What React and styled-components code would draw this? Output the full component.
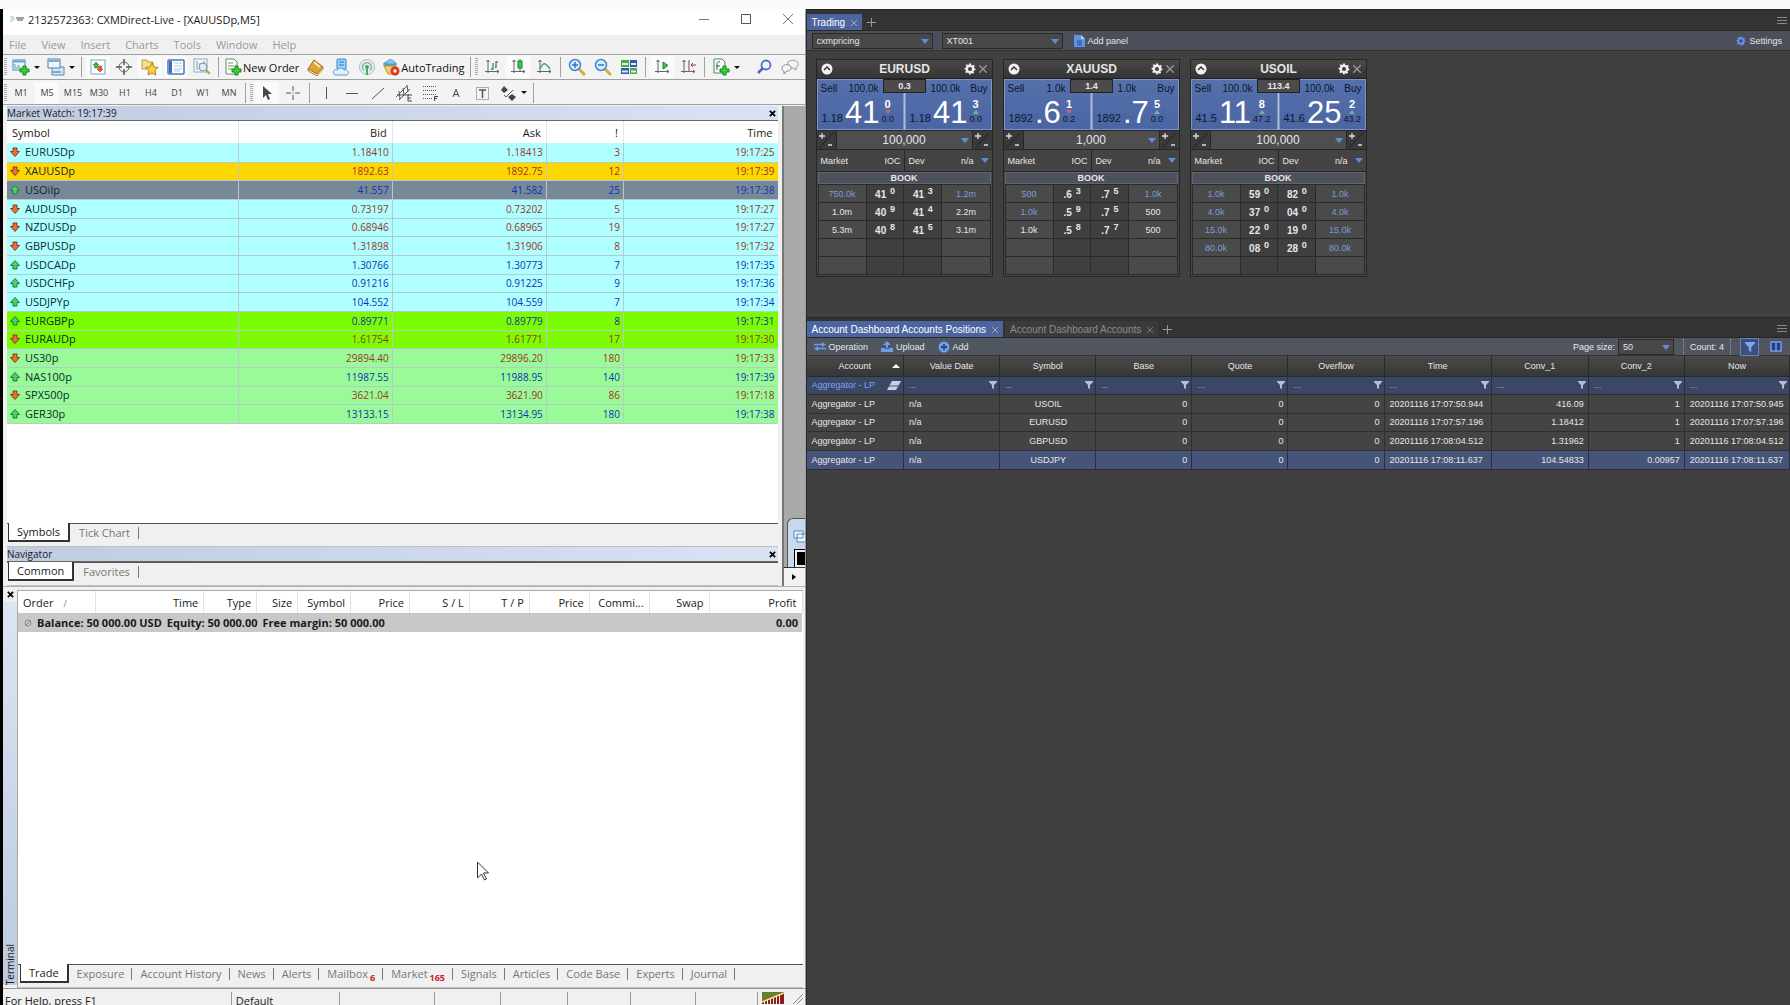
import React from 'react'
import styled, { createGlobalStyle } from 'styled-components'

const ui = '"Open Sans", "Noto Sans", sans-serif'
const arial = '"Liberation Sans", Arial, sans-serif'

const quotes = [
    ['EURUSDp', '1.18410', '1.18413', 3, '19:17:25', 'down', 'aqua'],
    ['XAUUSDp', '1892.63', '1892.75', 12, '19:17:39', 'down', 'gold'],
    ['USOilp', '41.557', '41.582', 25, '19:17:38', 'up', 'slate'],
    ['AUDUSDp', '0.73197', '0.73202', 5, '19:17:27', 'down', 'aqua'],
    ['NZDUSDp', '0.68946', '0.68965', 19, '19:17:27', 'down', 'aqua'],
    ['GBPUSDp', '1.31898', '1.31906', 8, '19:17:32', 'down', 'aqua'],
    ['USDCADp', '1.30766', '1.30773', 7, '19:17:35', 'up', 'aqua'],
    ['USDCHFp', '0.91216', '0.91225', 9, '19:17:36', 'up', 'aqua'],
    ['USDJPYp', '104.552', '104.559', 7, '19:17:34', 'up', 'aqua'],
    ['EURGBPp', '0.89771', '0.89779', 8, '19:17:31', 'up', 'lime'],
    ['EURAUDp', '1.61754', '1.61771', 17, '19:17:30', 'down', 'lime'],
    ['US30p', '29894.40', '29896.20', 180, '19:17:33', 'down', 'mint'],
    ['NAS100p', '11987.55', '11988.95', 140, '19:17:39', 'up', 'mint'],
    ['SPX500p', '3621.04', '3621.90', 86, '19:17:18', 'down', 'mint'],
    ['GER30p', '13133.15', '13134.95', 180, '19:17:38', 'up', 'mint'],
]

const rowColors = {
    aqua: '#aeffff',
    gold: '#ffd700',
    slate: '#778899',
    lime: '#7cfc00',
    mint: '#98fb98',
}

const cards = [
    {
        name: 'EURUSD', spread: '0.3', qty: '100,000',
        sell: { size: '100.0k', pre: '1.18', big: '41', sup: '0', move: '0.0', dir: 'down' },
        buy: { size: '100.0k', pre: '1.18', big: '41', sup: '3', move: '0.0', dir: 'up' },
        book: [
            ['750.0k', '41', '0', '41', '3', '1.2m', true, true],
            ['1.0m', '40', '9', '41', '4', '2.2m'],
            ['5.3m', '40', '8', '41', '5', '3.1m'],
            [], [],
        ],
    },
    {
        name: 'XAUUSD', spread: '1.4', qty: '1,000',
        sell: { size: '1.0k', pre: '1892', big: '.6', sup: '1', move: '0.2', dir: 'down' },
        buy: { size: '1.0k', pre: '1892', big: '.7', sup: '5', move: '0.0', dir: 'up' },
        book: [
            ['500', '.6', '3', '.7', '5', '1.0k', true, true],
            ['1.0k', '.5', '9', '.7', '5', '500', true, false],
            ['1.0k', '.5', '8', '.7', '7', '500'],
            [], [],
        ],
    },
    {
        name: 'USOIL', spread: '113.4', qty: '100,000',
        sell: { size: '100.0k', pre: '41.5', big: '11', sup: '8', move: '47.2', dir: 'up' },
        buy: { size: '100.0k', pre: '41.6', big: '25', sup: '2', move: '43.2', dir: 'up' },
        book: [
            ['1.0k', '59', '0', '82', '0', '1.0k', true, true],
            ['4.0k', '37', '0', '04', '0', '4.0k', true, true],
            ['15.0k', '22', '0', '19', '0', '15.0k', true, true],
            ['80.0k', '08', '0', '28', '0', '80.0k', true, true],
            [],
        ],
    },
]

const positions = [
    ['USOIL', '20201116 17:07:50.944', '416.09', '1', '20201116 17:07:50.945'],
    ['EURUSD', '20201116 17:07:57.196', '1.18412', '1', '20201116 17:07:57.196'],
    ['GBPUSD', '20201116 17:08:04.512', '1.31962', '1', '20201116 17:08:04.512'],
    ['USDJPY', '20201116 17:08:11.637', '104.54833', '0.00957', '20201116 17:08:11.637'],
]

const positionColumns = [
    ['Account', 97], ['Value Date', 96], ['Symbol', 96], ['Base', 96], ['Quote', 96],
    ['Overflow', 96], ['Time', 107], ['Conv_1', 97], ['Conv_2', 96], ['Now', 105],
]

const orderColumns = [
    ['Order', 78], ['Time', 108], ['Type', 53], ['Size', 41], ['Symbol', 53], ['Price', 59],
    ['S / L', 60], ['T / P', 60], ['Price', 60], ['Commi...', 60], ['Swap', 60], ['Profit', 93],
]

const terminalTabs = [
    ['Exposure'], ['Account History'], ['News'], ['Alerts'], ['Mailbox', 6], ['Market', 165],
    ['Signals'], ['Articles'], ['Code Base'], ['Experts'], ['Journal'],
]

const axes = <path d="M5 2v13M2 13.500h14M3.500 4 5 2l1.500 2M14 12l2 1.500-2 1.500" stroke="#666" fill="none" />
const plus = <path d="M11 8h3v3h3v3h-3v3h-3v-3H8v-3h3z" fill="#35d435" stroke="#12851c" />

// 18x18 drawings for the toolbar buttons
const icons = {
    newChart: <><rect x="1" y="2" width="12" height="10" fill="#eaf5fc" stroke="#4d86b8" /><path d="M1 3.500h12" stroke="#6fa3ce" strokeWidth="2" /><path d="M3 6v4h7M5 8h3" stroke="#6a9" fill="none" />{plus}</>,
    profiles: <><path d="M5 9h12v8H5z" fill="#d3e5f5" stroke="#5c84b4" /><path d="M1 1h12v9H1z" fill="#edf6fd" stroke="#4f7db0" /><path d="M2 3h10M5 14h9" stroke="#7da9d6" strokeWidth="2" /></>,
    watch: <><rect x="2" y="2" width="14" height="14" fill="#fff" stroke="#7aa3cc" /><path d="M7 4l3 3H8.500v3h-3V7H4z" fill="#43b04f" stroke="#1b7a26" strokeWidth=".5" /><path d="m11 14 3-3h-1.500V8h-3v3H8z" fill="#e05a32" stroke="#9a3d14" strokeWidth=".5" /></>,
    cross: <><circle cx="9" cy="9" r="5" fill="none" stroke="#666" /><path d="M9 1v6M9 11v6M1 9h6M11 9h6" stroke="#555" strokeWidth="1.500" /></>,
    folder: <><path d="M1 2h5l1 2h5v7H1z" fill="#f7e184" stroke="#b99a3a" /><path d="m11 5 2 4 4 .5-3 3 1 4.500-4-2-4 2 .700-4.500-3-3L9 9z" fill="#ffcf3d" stroke="#b48322" /></>,
    terminal: <><rect x="1" y="2" width="16" height="14" rx="1" fill="#fff" stroke="#4a7ab5" strokeWidth="1.500" /><path d="M2 3h3v12H2z" fill="#3f6fae" /><path d="M7 5h8M7 8h8M7 11h8M7 13h6" stroke="#a9c8e6" /></>,
    tester: <><rect x="1" y="1" width="13" height="13" fill="#f4f8fb" stroke="#8da9c2" /><path d="M4 3v9M7 5v6M11 3v6" stroke="#7d93a8" /><circle cx="10" cy="9" r="4" fill="#dceefa" fillOpacity=".8" stroke="#7792ab" /><path d="m13 12 4 4" stroke="#c39a45" strokeWidth="2" /></>,
    order: <><path d="M2 1h8l3 3v12H2z" fill="#fff" stroke="#6d8a6d" /><path d="M4 5h5M4 8h6M4 11h4" stroke="#5c9c5c" />{plus}</>,
    book: <><path d="M2 11 8 2l9 7-6 7z" fill="#e0a63a" stroke="#94651a" /><path d="m2 11 9 5 6-7v2l-6 7-9-5z" fill="#fae7ac" stroke="#94651a" strokeWidth=".7" /><path d="m8 4 6 5" stroke="#ffe9a5" strokeWidth="2" /></>,
    server: <><rect x="5" y="1" width="9" height="10" rx="1" fill="#9fd2fb" stroke="#2d83cf" /><path d="M7 4h5M7 7h5" stroke="#2879c4" /><path d="M2 16c-2-3 1-5 3-4 2-3 6-2 7 0 4-1 6 3 3 5H3z" fill="#e3f0fb" stroke="#5e9fd8" /></>,
    signal: <><circle cx="9" cy="9" r="7.500" fill="#e4eef0" stroke="#a9bfc6" /><path d="M6 12.500a4.500 4.500 0 1 1 6 0" fill="none" stroke="#7fa6b4" strokeWidth="1.300" /><circle cx="9" cy="9" r="2" fill="#3ea554" /><path d="M9 9v8" stroke="#45ad60" strokeWidth="2" /></>,
    auto: <><ellipse cx="8" cy="6" rx="7" ry="3" fill="#54a7d8" /><path d="M4 6c0-6 9-6 9 0z" fill="#7dc5ec" stroke="#3985b5" strokeWidth=".5" /><path d="M2 8h12l-2 8H6z" fill="#f2ce66" stroke="#bb8f2c" /><circle cx="13" cy="13" r="4.500" fill="#dc3820" /><rect x="11.500" y="11.500" width="3" height="3" fill="#fff" /></>,
    bars: <>{axes}<path d="M8 11h2V5m0 0v6M13 10V4h2M12 9h1" stroke="#3d8b4d" fill="none" strokeWidth="1.300" /></>,
    candle: <>{axes}<path d="M11 1v12" stroke="#1d8031" /><rect x="9" y="3" width="4" height="7" fill="#36c94a" stroke="#1d8031" /></>,
    line: <>{axes}<path d="M5 11c3-7 5-7 10 0" stroke="#4c9f5b" fill="none" strokeWidth="1.300" /></>,
    zoomIn: <><path d="m11 11 6 6" stroke="#d8ac3f" strokeWidth="3" /><circle cx="7" cy="7" r="5.500" fill="#d4ecff" stroke="#3d88cf" strokeWidth="1.500" /><path d="M4 7h6M7 4v6" stroke="#3575bf" strokeWidth="1.500" /></>,
    zoomOut: <><path d="m11 11 6 6" stroke="#d8ac3f" strokeWidth="3" /><circle cx="7" cy="7" r="5.500" fill="#d4ecff" stroke="#3d88cf" strokeWidth="1.500" /><path d="M4 7h6" stroke="#3575bf" strokeWidth="1.500" /></>,
    tiles: <><path d="M1 2h8v7H1zM10 10h7v6h-7z" fill="#4ea843" /><path d="M10 2h7v7h-7zM1 10h8v6H1z" fill="#2c5da8" /><path d="M2 6h6M11 6h5M2 13.500h6M11 13.500h5" stroke="#dcecf8" strokeWidth="2" /></>,
    scroll: <>{axes}<path d="m10 4 5 3.500-5 3.500z" fill="#46c257" stroke="#1b8532" /></>,
    shift: <>{axes}<path d="M10 2v11M17 7h-5M14 5l-2 2 2 2" stroke="#7a4a3c" fill="none" /></>,
    indicator: <><path d="M2 1h8l3 3v11H2z" fill="#f8fff8" stroke="#4c8a4c" /><path d="M8 4c-3-1-3 1-3 3v5M4 8h4" fill="none" stroke="#456" />{plus}</>,
    search: <><circle cx="11" cy="7" r="4.500" fill="#edf3ff" stroke="#5670c4" strokeWidth="1.800" /><path d="m8 10-5 5" stroke="#4c66bd" strokeWidth="2.500" /></>,
    chat: <><path d="M7 4c3-3 10-2 10 2 0 2-1 3-2 3v3l-3-2c-4 0-6-3-5-6z" fill="#f5f5f5" stroke="#999" /><path d="M1 10c0-3 4-4 7-3 4 2 2 6-2 6l-3 3v-3c-1 0-2-1-2-3z" fill="#f5f5f5" stroke="#888" /></>,
    cursor: <path d="M5 2v12l3-3 2 5 2-1-2-5h4z" fill="#4a4a4a" />,
    thinCross: <path d="M9 2v5M9 11v5M2 9h5M11 9h5M8.500 9h1" stroke="#555" />,
    vline: <path d="M9.500 3v12" stroke="#555" />,
    hline: <path d="M3 9.500h12" stroke="#555" />,
    trend: <path d="M3 15 15 4" stroke="#555" />,
    channel: <><path d="M1 13 12 2M4 16 15 5M4 7l1 8M8 4l1 7M12 1l1 7M2 11h12" stroke="#555" fill="none" /><path d="M17 11h-4v6h4M13 14h3" stroke="#444" fill="none" /></>,
    fib: <><path d="M2 2.500h13M2 6.500h13M2 10.500h13M2 14.500h9" stroke="#555" strokeDasharray="1 1" /><path d="M17 12.500h-3.500V17M13 14.500h3" stroke="#444" fill="none" /></>,
    textBox: <><rect x="3.500" y="3.500" width="12" height="12" fill="none" stroke="#666" strokeDasharray="1 1" /><path d="M6 6h7M9.500 6v8" stroke="#555" strokeWidth="1.500" /></>,
    shapes: <><path d="m5 2 4 4-4 3-3-3zM13 10l4 3-4 4-4-4z" fill="#444" /><path d="m5 11 2 2 7-7" stroke="#555" fill="none" /></>,
}

const Icon = ({ name, size = 18 }) => (
    <svg width={size} height={size} viewBox="0 0 18 18" aria-hidden="true">{icons[name]}</svg>
)

const Caret = ({ color = '#111' }) => (
    <svg width="6" height="3" viewBox="0 0 6 3" aria-hidden="true"><path d="M0 0h6L3 3z" fill={color} /></svg>
)

const BlueCaret = () => (
    <svg width="8" height="5" viewBox="0 0 8 5" aria-hidden="true"><path d="M0 0h8L4 5z" fill="#5f8be0" /></svg>
)

const Cross = ({ size = 8, color = '#aaa', weight = 1 }) => (
    <svg width={size} height={size} viewBox="0 0 8 8" aria-hidden="true">
        <path d="m1 1 6 6M7 1 1 7" stroke={color} strokeWidth={weight} />
    </svg>
)

const Gear = ({ size = 12, color = '#eee' }) => (
    <svg width={size} height={size} viewBox="0 0 24 24" aria-hidden="true">
        <path fillRule="evenodd" fill={color} d="M10 1h4l.7 3.200 2 .9L19.500 3.300l2 2.500-1.300 3 .6 1.700L23 12v2l-3 1-1 2 1.300 2.700-2.600 2-2.700-1.400-1.700.6L13.500 23h-3.200l-.9-3-2-.9-2.900 1.600-2-2.700L4 15.300l-.6-1.800L1 12v-2l3-1 .8-2-1.500-2.600 2.300-2L8.300 4l1.200-.5zM12 8a4 4 0 1 0 0 8 4 4 0 0 0 0-8z" />
    </svg>
)

const Funnel = ({ size = 8, color = '#b4bfd6' }) => (
    <svg width={size} height={size} viewBox="0 0 8 8" aria-hidden="true"><path d="M0 0h8v1L5 4v4L3 7V4L0 1z" fill={color} /></svg>
)

const Arrow = ({ dir }) => (
    <svg width="10" height="10" viewBox="0 0 10 10" aria-hidden="true">
        {dir === 'up'
            ? <path d="m5 .500 4.500 5H7V9H3V5.500H.500z" fill="#4fd06a" stroke="#1d7a3c" />
            : <path d="m5 9.500 4.500-5H7V1H3v3.500H.500z" fill="#e5713a" stroke="#8a3a18" />}
    </svg>
)

const Burger = () => (
    <svg width="10" height="8" viewBox="0 0 10 8" aria-hidden="true"><path d="M0 1.500h10M0 4.500h10M0 7.500h10" stroke="#888" /></svg>
)

const Tool = ({ name, label, drop, active, children }) => (
    <ToolButton type="button" aria-label={label} $active={active} $drop={drop} $wide={!!children}>
        <Icon name={name} />
        {children}
        {drop && <Caret />}
    </ToolButton>
)

const PriceSide = ({ label, side, buy }) => (
    <PriceButton type="button">
        <PriceTop $buy={buy}>
            <span>{label}</span>
            <span>{side.size}</span>
        </PriceTop>
        <PriceLine>
            <Small>{side.pre}</Small>
            <Big>{side.big}</Big>
            <Pips>
                <b>{side.sup}</b>
                <svg width="6" height="4" viewBox="0 0 6 4" aria-hidden="true">
                    {side.dir === 'up' ? <path d="m3 0 3 4H0z" fill="#6fb8a0" /> : <path d="M0 0h6L3 4z" fill="#d0607c" />}
                </svg>
                <span>{side.move}</span>
            </Pips>
        </PriceLine>
    </PriceButton>
)

const StepButton = ({ name }) => (
    <Step type="button" aria-label={name}>
        <svg width="17" height="18" viewBox="0 0 17 18" aria-hidden="true">
            <path d="M2 17 16 2" stroke="#222" />
            <path d="M2 5h6M5 2v6M11 14h4" stroke="#ddd" strokeWidth="1.300" />
        </svg>
    </Step>
)

const PriceCard = ({ card }) => (
    <Card>
        <CardHead>
            <IconButton type="button" aria-label="Collapse">
                <svg width="12" height="12" viewBox="0 0 12 12"><circle cx="6" cy="6" r="5.500" fill="#f2f2f2" /><path d="m3 7 3-3 3 3" fill="none" stroke="#333" strokeWidth="1.500" /></svg>
            </IconButton>
            <CardName>{card.name}</CardName>
            <IconButton type="button" aria-label="Card settings"><Gear /></IconButton>
            <IconButton type="button" aria-label="Close card"><Cross size={10} color="#999" /></IconButton>
        </CardHead>
        <Prices>
            <PriceSide label="Sell" side={card.sell} />
            <PriceSide label="Buy" side={card.buy} buy />
            <Spread>{card.spread}</Spread>
        </Prices>
        <QtyRow>
            <StepButton name="Sell size" />
            <Qty type="button"><span>{card.qty}</span><BlueCaret /></Qty>
            <StepButton name="Buy size" />
        </QtyRow>
        <Terms>
            <Term><span>Market</span><span>IOC</span></Term>
            <Term><span>Dev</span><TermValue>n/a <BlueCaret /></TermValue></Term>
        </Terms>
        <Book>
            <caption>BOOK</caption>
            <tbody>
                {card.book.map((r, i) => (
                    <tr key={i}>
                        <SizeCell $blue={r[6]}>{r[0]}</SizeCell>
                        <LevelCell>{r[1]} <sup>{r[2]}</sup></LevelCell>
                        <LevelCell>{r[3]} <sup>{r[4]}</sup></LevelCell>
                        <SizeCell $blue={r[7]}>{r[5]}</SizeCell>
                    </tr>
                ))}
            </tbody>
        </Book>
    </Card>
)

const MetaTrader = () => (
    <Window>
        <TitleBar>
            <svg width="14" height="8" viewBox="0 0 14 8" aria-hidden="true"><path d="M0 2h4M1 4h4M0 6h3" stroke="#8fd08f" /><path d="M6 3h8M7 5h6" stroke="#444" /></svg>
            <TitleText>2132572363: CXMDirect-Live - [XAUUSDp,M5]</TitleText>
            <WinButton type="button" aria-label="Minimize"><svg width="10" height="10" viewBox="0 0 10 10"><path d="M0 5.500h10" stroke="#777" /></svg></WinButton>
            <WinButton type="button" aria-label="Maximize"><svg width="10" height="10" viewBox="0 0 10 10"><path d="M.5.500h9v9h-9z" fill="none" stroke="#555" /></svg></WinButton>
            <WinButton type="button" aria-label="Close"><svg width="10" height="10" viewBox="0 0 10 10"><path d="m0 0 10 10M10 0 0 10" stroke="#777" /></svg></WinButton>
        </TitleBar>
        <Menu>
            {['File', 'View', 'Insert', 'Charts', 'Tools', 'Window', 'Help'].map(m => (
                <MenuItem type="button" key={m}>{m}</MenuItem>
            ))}
        </Menu>
        <ToolBar>
            <Grip />
            <Tool name="newChart" label="New chart" drop />
            <Tool name="profiles" label="Profiles" drop />
            <Divider />
            <Tool name="watch" label="Market Watch" active />
            <Tool name="cross" label="Data window" />
            <Tool name="folder" label="Navigator" active />
            <Tool name="terminal" label="Terminal" active />
            <Tool name="tester" label="Strategy tester" />
            <Divider />
            <Tool name="order">New Order</Tool>
            <Tool name="book" label="MetaEditor" />
            <Tool name="server" label="Hosting" />
            <Tool name="signal" label="Signals" />
            <Tool name="auto">AutoTrading</Tool>
            <Divider />
            <Grip />
            <Tool name="bars" label="Bar chart" />
            <Tool name="candle" label="Candlesticks" active />
            <Tool name="line" label="Line chart" />
            <Divider />
            <Tool name="zoomIn" label="Zoom in" />
            <Tool name="zoomOut" label="Zoom out" />
            <Tool name="tiles" label="Tile windows" />
            <Divider />
            <Tool name="scroll" label="Auto scroll" active />
            <Tool name="shift" label="Chart shift" />
            <Divider />
            <Tool name="indicator" label="Indicators" drop />
            <Spacer />
            <Tool name="search" label="Search" />
            <Tool name="chat" label="Chat" />
        </ToolBar>
        <ToolBar>
            <Grip />
            {['M1', 'M5', 'M15', 'M30', 'H1', 'H4', 'D1', 'W1', 'MN'].map(p => (
                <ToolButton type="button" key={p} $active={p === 'M5'} $period>{p}</ToolButton>
            ))}
            <Divider />
            <Grip />
            <Tool name="cursor" label="Cursor" active />
            <Tool name="thinCross" label="Crosshair" />
            <Divider />
            <Tool name="vline" label="Vertical line" />
            <Tool name="hline" label="Horizontal line" />
            <Tool name="trend" label="Trendline" />
            <Tool name="channel" label="Channel" />
            <Tool name="fib" label="Fibonacci" />
            <ToolButton type="button" $letter>A</ToolButton>
            <Tool name="textBox" label="Text label" />
            <Tool name="shapes" label="Arrows" drop />
            <Divider />
        </ToolBar>
        <Workspace>
            <Docks>
                <PanelTitle>
                    <span>Market Watch: 19:17:39</span>
                    <CloseButton type="button" aria-label="Close Market Watch"><Cross color="#000" weight={2} size={7} /></CloseButton>
                </PanelTitle>
                <Watch>
                    <WatchTable>
                        <colgroup>
                            <col style={{ width: '30%' }} /><col style={{ width: '20%' }} /><col style={{ width: '20%' }} />
                            <col style={{ width: '10%' }} /><col style={{ width: '20%' }} />
                        </colgroup>
                        <thead>
                            <tr><th>Symbol</th><th>Bid</th><th>Ask</th><th>!</th><th>Time</th></tr>
                        </thead>
                        <tbody>
                            {quotes.map(([symbol, bid, ask, spread, time, dir, tone]) => (
                                <QuoteRow key={symbol} $tone={tone} $dir={dir}>
                                    <td><Quote><Arrow dir={dir} />{symbol}</Quote></td>
                                    <td>{bid}</td>
                                    <td>{ask}</td>
                                    <td>{spread}</td>
                                    <td>{time}</td>
                                </QuoteRow>
                            ))}
                        </tbody>
                    </WatchTable>
                </Watch>
                <Tabs>
                    <Tab type="button" $active>Symbols</Tab>
                    <Tab type="button">Tick Chart</Tab>
                </Tabs>
                <PanelTitle>
                    <span>Navigator</span>
                    <CloseButton type="button" aria-label="Close Navigator"><Cross color="#000" weight={2} size={7} /></CloseButton>
                </PanelTitle>
                <Tabs>
                    <Tab type="button" $active>Common</Tab>
                    <Tab type="button">Favorites</Tab>
                </Tabs>
            </Docks>
            <ChartArea>
                <MiniWindow>
                    <svg width="12" height="14" viewBox="0 0 12 14" aria-hidden="true"><path d="M1 1h9v7H1zM4 4h9v8H4z" fill="#eef7ff" stroke="#4b8fc4" /></svg>
                    <MiniChart />
                </MiniWindow>
                <ScrollEnd>
                    <svg width="5" height="6" viewBox="0 0 5 6" aria-hidden="true"><path d="M0 0v6l4-3z" /></svg>
                </ScrollEnd>
            </ChartArea>
        </Workspace>
        <Terminal>
            <TerminalSide>
                <CloseButton type="button" aria-label="Close Terminal"><Cross color="#000" weight={2} size={7} /></CloseButton>
                <SideLabel>Terminal</SideLabel>
            </TerminalSide>
            <TerminalMain>
                <OrdersPane>
                    <Orders>
                        <colgroup>{orderColumns.map(([, w], i) => <col key={i} style={{ width: `${w / 7.85}%` }} />)}</colgroup>
                        <thead>
                            <tr>
                                {orderColumns.map(([name], i) => (
                                    <th key={i}>{name}{i === 0 && <SortMark>/</SortMark>}</th>
                                ))}
                            </tr>
                        </thead>
                        <tbody>
                            <tr>
                                <td colSpan="11">
                                    <Balance>
                                        <svg width="8" height="8" viewBox="0 0 8 8" aria-hidden="true"><circle cx="4" cy="4" r="3" fill="none" stroke="#888" /><path d="m2 6 4-4" stroke="#888" /></svg>
                                        <span>Balance: 50 000.00 USD</span>
                                        <span>Equity: 50 000.00</span>
                                        <span>Free margin: 50 000.00</span>
                                    </Balance>
                                </td>
                                <td>0.00</td>
                            </tr>
                        </tbody>
                    </Orders>
                </OrdersPane>
                <Tabs $last>
                    <Tab type="button" $active>Trade</Tab>
                    {terminalTabs.map(([name, count]) => (
                        <Tab type="button" key={name} $tight>{name}{count && <Count>{count}</Count>}</Tab>
                    ))}
                </Tabs>
            </TerminalMain>
        </Terminal>
        <StatusBar>
            <StatusCell>For Help, press F1</StatusCell>
            <StatusCell>Default</StatusCell>
            <StatusCell />
            <StatusCell />
            <StatusCell />
            <StatusCell />
            <StatusCell />
            <StatusCell />
            <StatusCell>
                <svg width="22" height="12" viewBox="0 0 22 12" aria-hidden="true">
                    <path d="M1 0v12M4 0v12M7 0v12M10 0v12M13 0v12M16 0v12M19 0v12M21 0v12" stroke="#8a1f14" strokeWidth="2" />
                    <path d="M0 0h22v1L0 10z" fill="#6b7d2c" />
                    <path d="M0 10 22 1" stroke="#f2e8a0" strokeWidth="1.500" />
                </svg>
                <svg width="10" height="12" viewBox="0 0 10 12" aria-hidden="true"><path d="m0 12 10-10M4 12l6-6" stroke="#888" /></svg>
            </StatusCell>
        </StatusBar>
    </Window>
)

const Trader = () => (
    <Platform>
        <TabStrip>
            <DarkTab type="button" $active>Trading <Cross /></DarkTab>
            <PlusButton type="button" aria-label="Add tab">
                <svg width="9" height="9" viewBox="0 0 9 9"><path d="M0 4.500h9M4.500 0v9" stroke="#999" /></svg>
            </PlusButton>
            <Spacer />
            <IconButton type="button" aria-label="Trading menu"><Burger /></IconButton>
        </TabStrip>
        <Bar>
            <SelectBox $width={121}>
                <select aria-label="Pricing"><option>cxmpricing</option></select>
                <BlueCaret />
            </SelectBox>
            <SelectBox $width={121}>
                <select aria-label="Account"><option>XT001</option></select>
                <BlueCaret />
            </SelectBox>
            <BarButton type="button">
                <svg width="11" height="12" viewBox="0 0 11 12" aria-hidden="true"><path d="M0 0h7l4 4v8H0z" fill="#5f93ea" /><path d="M7 0v4h4" fill="#b9d1f8" /><path d="M3 6h5M3 8h5M3 10h5" stroke="#2c4f91" /></svg>
                Add panel
            </BarButton>
            <Spacer />
            <BarButton type="button"><Gear size={10} color="#5f93ea" />Settings</BarButton>
        </Bar>
        <Cards>
            {cards.map(card => <PriceCard card={card} key={card.name} />)}
        </Cards>
        <TabStrip $second>
            <DarkTab type="button" $active>Account Dashboard Accounts Positions <Cross /></DarkTab>
            <DarkTab type="button">Account Dashboard Accounts <Cross color="#777" /></DarkTab>
            <PlusButton type="button" aria-label="Add dashboard">
                <svg width="9" height="9" viewBox="0 0 9 9"><path d="M0 4.500h9M4.500 0v9" stroke="#999" /></svg>
            </PlusButton>
            <Spacer />
            <IconButton type="button" aria-label="Dashboard menu"><Burger /></IconButton>
        </TabStrip>
        <Bar $slim>
            <BarButton type="button">
                <svg width="12" height="9" viewBox="0 0 12 9" aria-hidden="true"><path d="M0 2.500h9M3 6.500h9" stroke="#6d9cf0" strokeWidth="1.500" /><path d="m8 0 4 2.500L8 5zM4 4 0 6.500 4 9z" fill="#6d9cf0" /></svg>
                Operation
            </BarButton>
            <BarButton type="button">
                <svg width="12" height="11" viewBox="0 0 12 11" aria-hidden="true"><path d="m6 0 4 4H7v3H5V4H2zM0 7h4v1h4V7h4v4H0z" fill="#6d9cf0" /></svg>
                Upload
            </BarButton>
            <BarButton type="button">
                <svg width="12" height="12" viewBox="0 0 12 12" aria-hidden="true"><circle cx="6" cy="6" r="5.500" fill="#6d9cf0" /><path d="M3 6h6M6 3v6" stroke="#34466b" strokeWidth="1.800" /></svg>
                Add
            </BarButton>
            <Spacer />
            <label htmlFor="page-size">Page size:</label>
            <SelectBox $width={56} $tight>
                <select id="page-size"><option>50</option></select>
                <BlueCaret />
            </SelectBox>
            <CountLabel>Count: 4</CountLabel>
            <FilterToggle type="button" aria-label="Filter"><Funnel size={10} color="#7aa7f5" /></FilterToggle>
            <BarButton type="button" aria-label="Columns">
                <svg width="12" height="11" viewBox="0 0 12 11" aria-hidden="true"><path d="M1 1h10v9H1zM6 1v9" fill="#27406f" stroke="#6d9cf0" strokeWidth="1.500" /></svg>
            </BarButton>
        </Bar>
        <Positions>
            <colgroup>{positionColumns.map(([name, w]) => <col key={name} style={{ width: `${w / 9.82}%` }} />)}</colgroup>
            <thead>
                <tr>
                    {positionColumns.map(([name], i) => (
                        <th key={name}>
                            <HeadCell $sorted={i === 0}>
                                <span>{name}</span>
                                {i === 0 && <svg width="8" height="4" viewBox="0 0 8 4" aria-hidden="true"><path d="m4 0 4 4H0z" fill="#fff" /></svg>}
                            </HeadCell>
                        </th>
                    ))}
                </tr>
                <FilterRow>
                    {positionColumns.map(([name], i) => (
                        <td key={name}>
                            <FilterCell>
                                <input type="text" aria-label={`Filter ${name}`} placeholder="..." defaultValue={i === 0 ? 'Aggregator - LP' : ''} />
                                {i === 0
                                    ? <svg width="14" height="9" viewBox="0 0 14 9" aria-hidden="true"><path d="M5 0h9L9 9H0z" fill="#c7cfe0" /><path d="M2 5h9" stroke="#4b5878" /></svg>
                                    : <Funnel />}
                            </FilterCell>
                        </td>
                    ))}
                </FilterRow>
            </thead>
            <tbody>
                {positions.map(([symbol, time, conv1, conv2, now], i) => (
                    <PositionRow key={symbol} $selected={i === 3}>
                        <td>Aggregator - LP</td>
                        <td>n/a</td>
                        <CenterCell>{symbol}</CenterCell>
                        <NumberCell>0</NumberCell>
                        <NumberCell>0</NumberCell>
                        <NumberCell>0</NumberCell>
                        <td>{time}</td>
                        <NumberCell>{conv1}</NumberCell>
                        <NumberCell>{conv2}</NumberCell>
                        <td>{now}</td>
                    </PositionRow>
                ))}
            </tbody>
        </Positions>
    </Platform>
)

const App = () => (
    <>
        <GlobalStyle />
        <Screen>
            <MetaTrader />
            <Trader />
            <Pointer width="12" height="20" viewBox="0 0 12 20" aria-hidden="true">
                <path d="M.5 1v16l4-4 3 6 2-1-3-6h5z" fill="#fff" stroke="#333" />
            </Pointer>
        </Screen>
    </>
)

const GlobalStyle = createGlobalStyle`
    * {
        box-sizing: border-box;
    }
    body {
        margin: 0;
        background: #f9f9f9;
    }
    button, input, select {
        font: inherit;
        color: inherit;
        margin: 0;
        padding: 0;
        border: none;
        background: none;
    }
    svg {
        display: block;
        flex: none;
    }
    table {
        border-collapse: collapse;
        border-spacing: 0;
        table-layout: fixed;
        width: 100%;
    }
    th, td {
        padding: 0;
        font-weight: normal;
    }
`;

const Screen = styled.main`
    position: relative;
    display: grid;
    grid-template-columns: 45fr 55fr;
    height: 100vh;
    padding-top: 9px;
    overflow: hidden;
`;

const Pointer = styled.svg`
    position: absolute;
    left: 477px;
    top: 861px;
`;

const Spacer = styled.div`
    flex: 1;
`;

/* left window */

const Window = styled.section`
    display: flex;
    flex-direction: column;
    min-width: 0;
    min-height: 0;
    border-left: 3px solid #000;
    border-right: 1px solid #9a9a9a;
    background: #f0f0f0;
    color: #1a1a1a;
    font-family: ${ui};
    font-size: 11px;
`;

const TitleBar = styled.header`
    display: flex;
    align-items: center;
    height: 26px;
    padding: 0 12px 6px 7px;
    background: #fff;
`;

const TitleText = styled.h1`
    flex: 1;
    margin: 0 0 0 4px;
    font-size: 11px;
    font-weight: normal;
`;

const WinButton = styled.button`
    margin-left: 32px;
`;

const Menu = styled.nav`
    display: flex;
    gap: 15px;
    height: 20px;
    padding: 0 6px;
    border-bottom: 1px solid #a0a0a0;
`;

const MenuItem = styled.button`
    color: #999;
`;

const ToolBar = styled.div`
    display: flex;
    align-items: center;
    height: 25px;
    padding-right: 2px;
    border-bottom: 1px solid #a0a0a0;
    background: #f3f3f3;
    & + & {
        padding-top: 1px;
    }
`;

const ToolButton = styled.button`
    display: flex;
    align-items: center;
    justify-content: ${p => (p.$wide ? 'flex-start' : 'center')};
    gap: ${p => (p.$wide ? '1px' : '4px')};
    flex: none;
    width: ${p => (p.$wide ? 'auto' : p.$drop ? '33px' : '24px')};
    height: 22px;
    margin: 0 1px;
    white-space: nowrap;
    padding-right: ${p => (p.$wide ? '1px' : '0')};
    border: 1px solid ${p => (p.$active ? '#a0a0a0 #fff #fff #a0a0a0' : 'transparent')};
    background: ${p => (p.$active ? '#fafafa' : 'none')};
    color: ${p => (p.$period || p.$letter ? '#444' : '#111')};
    font-size: ${p => (p.$period ? '9px' : '11px')};
`;

const Divider = styled.div`
    flex: none;
    width: 1px;
    height: 20px;
    margin: 0 3px;
    background: #a0a0a0;
`;

const Grip = styled.div`
    flex: none;
    width: 3px;
    height: 18px;
    margin: 0 1px;
    background: repeating-linear-gradient(#aaa 0 1px, #f3f3f3 1px 2px);
`;

const Workspace = styled.div`
    display: flex;
    padding-top: 1px;
    border-bottom: 1px solid #b0b0b0;
`;

const Docks = styled.div`
    flex: 1;
    min-width: 0;
    padding: 0 4px;
`;

const PanelTitle = styled.div`
    display: flex;
    align-items: center;
    justify-content: space-between;
    height: 15px;
    padding-right: 1px;
    border-bottom: 1px solid #666;
    background: linear-gradient(90deg, #bfcbe0, #d8e4f4);
    font-size: 10px;
`;

const CloseButton = styled.button`
    display: flex;
    flex: none;
    padding: 1px;
`;

const Watch = styled.div`
    min-height: 402px;
    background: #fff;
`;

const WatchTable = styled.table`
    th {
        height: 22px;
        padding: 0 5px;
        border-right: 1px solid #e5e5e5;
        text-align: right;
        &:first-child {
            text-align: left;
        }
        &:last-child {
            border-right: none;
        }
    }
`;

const QuoteRow = styled.tr`
    background: ${p => rowColors[p.$tone]};
    color: ${p => (p.$dir === 'up' ? '#1430b4' : '#a03228')};
    td {
        height: 19px;
        padding: 0 3px;
        border-right: 1px solid #b9c9c9;
        border-bottom: 1px solid #b9c9c9;
        text-align: right;
        font-size: 10px;
        line-height: 14px;
    }
    td:first-child {
        color: #0c2a30;
        font-size: 11px;
    }
    td:last-child {
        border-right: none;
    }
    &:nth-child(3n + 2) td {
        height: 18px;
    }
`;

const Quote = styled.div`
    display: flex;
    align-items: center;
    gap: 5px;
`;

const Tabs = styled.div`
    display: flex;
    align-items: flex-start;
    height: 24px;
    padding-left: ${p => (p.$last ? '2px' : '1px')};
    border-top: 1px solid #555;
    border-bottom: 1px solid #c0c0c0;
`;

const Tab = styled.button`
    position: relative;
    flex: none;
    height: 18px;
    padding: 0 ${p => (p.$tight ? '8px' : '9px')};
    line-height: 16px;
    color: ${p => (p.$active ? '#1a1a1a' : '#777')};
    ${p => p.$active && `
        margin-top: -1px;
        height: 19px;
        padding: 0 8px;
        background: #fff;
        border: solid #333;
        border-width: 0 2px 2px 1px;
    `}
    &:not(:first-child)::after {
        content: '';
        position: absolute;
        right: 0;
        top: 3px;
        width: 1px;
        height: 12px;
        background: #777;
    }
`;

const Count = styled.sub`
    margin-left: 2px;
    color: #c22;
    font-size: 9px;
    font-weight: bold;
    line-height: 9px;
`;

const ChartArea = styled.div`
    display: flex;
    flex-direction: column;
    width: 23px;
    border-left: 2px solid #777;
    background: #a9a9a9;
`;

const MiniWindow = styled.div`
    display: flex;
    flex-direction: column;
    align-items: flex-end;
    gap: 6px;
    margin-top: auto;
    margin-left: 3px;
    padding-top: 11px;
    border: solid #555;
    border-width: 1px 0 0 1px;
    border-radius: 6px 0 0 0;
    background: #c9d9ec;
    overflow: hidden;
`;

const MiniChart = styled.div`
    width: 10px;
    height: 17px;
    border: 2px solid #eee;
    border-right: none;
    outline: 1px solid #000;
    background: #000;
`;

const ScrollEnd = styled.div`
    display: flex;
    align-items: center;
    justify-content: center;
    height: 19px;
    border-top: 1px solid #333;
    background: #f3f3f3;
`;

const Terminal = styled.div`
    display: flex;
    flex: 1;
    min-height: 0;
    padding: 3px 2px 0 0;
`;

const TerminalSide = styled.div`
    display: flex;
    flex-direction: column;
    align-items: center;
    justify-content: space-between;
    width: 14px;
    margin-bottom: 3px;
    background: linear-gradient(#f0f0f0 12px, #dbe5f3 12px, #bccadf);
`;

const SideLabel = styled.span`
    writing-mode: vertical-rl;
    transform: rotate(180deg);
    font-size: 10px;
    line-height: 13px;
`;

const TerminalMain = styled.div`
    display: flex;
    flex-direction: column;
    flex: 1;
    min-width: 0;
    border-left: 1px solid #aaa;
`;

const OrdersPane = styled.div`
    flex: 1;
    border-top: 1px solid #aaa;
    background: #fff;
`;

const Orders = styled.table`
    th {
        height: 22px;
        padding: 0 5px;
        border-right: 1px solid #e2e2e2;
        text-align: right;
        white-space: nowrap;
    }
    th:first-child {
        text-align: left;
    }
    td {
        height: 19px;
        padding: 0 4px 0 6px;
        background: #c8c8c8;
        font-weight: bold;
        text-align: right;
    }
`;

const SortMark = styled.span`
    margin-left: 10px;
    color: #777;
    font-size: 9px;
`;

const Balance = styled.div`
    display: flex;
    align-items: center;
    gap: 5px;
`;

const StatusBar = styled.footer`
    display: grid;
    grid-template-columns: 228fr 108fr 95fr 66fr 67fr 63fr 65fr 62fr 48fr;
    height: 17px;
    padding-top: 3px;
    border-top: 1px solid #999;
    overflow: hidden;
`;

const StatusCell = styled.div`
    display: flex;
    justify-content: space-between;
    padding: 0 1px 0 4px;
    border-left: 1px solid #999;
    line-height: 18px;
    &:first-child {
        padding-left: 2px;
        border-left: none;
    }
`;

/* right window */

const Platform = styled.section`
    min-width: 0;
    border-left: 1px solid #2a2a2a;
    background: #404040;
    color: #e6e6e6;
    font-family: ${arial};
    font-size: 9px;
`;

const TabStrip = styled.div`
    display: flex;
    align-items: flex-end;
    gap: 2px;
    height: ${p => (p.$second ? '21px' : '22px')};
    padding-right: 3px;
    border-top: 1px solid #262626;
    border-bottom: 1px solid #262626;
    background: #333;
`;

const DarkTab = styled.button`
    display: flex;
    align-items: center;
    gap: 5px;
    height: 16px;
    padding: 1px 4px 0 5px;
    background: ${p => (p.$active ? '#4c659f' : '#3b3b3b')};
    color: ${p => (p.$active ? '#fff' : '#8c8c8c')};
    font-size: 10px;
`;

const PlusButton = styled.button`
    padding: 3px;
`;

const IconButton = styled.button`
    display: flex;
    flex: none;
    align-self: center;
`;

const Bar = styled.div`
    display: flex;
    align-items: center;
    gap: 9px;
    height: ${p => (p.$slim ? '18px' : '20px')};
    padding: 0 6px 0 5px;
    border-bottom: 1px solid #333;
    background: ${p => (p.$slim ? '#50565f' : '#4b4f5a')};
`;

const SelectBox = styled.div`
    position: relative;
    width: ${p => p.$width}px;
    height: 16px;
    margin-left: ${p => (p.$tight ? '-6px' : '0')};
    border: 1px solid #2a2a2a;
    background: #484848;
    select {
        appearance: none;
        display: block;
        width: 100%;
        height: 100%;
        padding-left: 4px;
        outline: none;
    }
    svg {
        position: absolute;
        right: 3px;
        top: 5px;
        pointer-events: none;
    }
`;

const BarButton = styled.button`
    display: flex;
    align-items: center;
    gap: 3px;
    padding: 0 2px;
`;

const CountLabel = styled.span`
    padding: 3px 6px;
    border: dotted #999;
    border-width: 0 1px;
`;

const FilterToggle = styled.button`
    display: flex;
    align-items: center;
    justify-content: center;
    width: 19px;
    height: 18px;
    border: 1px solid #6484bb;
    background: #3c5079;
`;

const Cards = styled.div`
    display: flex;
    gap: 10px;
    padding: 8px 9px 40px;
`;

const Card = styled.article`
    width: 177px;
    border: 1px solid #262626;
    background: #484848;
`;

const CardHead = styled.header`
    display: flex;
    align-items: center;
    gap: 2px;
    height: 18px;
    padding: 0 4px;
    background: linear-gradient(#4a4747, #353535);
`;

const CardName = styled.h2`
    flex: 1;
    margin: 0 0 0 13px;
    text-align: center;
    font-size: 12px;
    line-height: 12px;
`;

const Prices = styled.div`
    position: relative;
    display: grid;
    grid-template-columns: 1fr 1fr;
    gap: 1px;
    background: #b4bccb;
    border-top: 1px solid #222;
`;

const PriceButton = styled.button`
    height: 51px;
    border: 1px solid #7d94c8;
    background: linear-gradient(#5570aa, #4a65a2);
    color: #0d1630;
    text-align: left;
`;

const PriceTop = styled.div`
    display: flex;
    flex-direction: ${p => (p.$buy ? 'row-reverse' : 'row')};
    justify-content: space-between;
    padding: ${p => (p.$buy ? '3px 3px 0 25px' : '3px 24px 0 3px')};
    font-size: 10px;
    line-height: 12px;
`;

const PriceLine = styled.div`
    display: flex;
    align-items: flex-end;
    gap: 2px;
    height: 34px;
    padding-left: 4px;
`;

const Small = styled.span`
    padding-bottom: 4px;
    font-size: 11px;
    line-height: 14px;
`;

const Big = styled.span`
    color: #fff;
    font-size: 31px;
    line-height: 33px;
`;

const Pips = styled.span`
    display: flex;
    flex-direction: column;
    align-items: center;
    padding-bottom: 5px;
    font-size: 9px;
    line-height: 10px;
    b {
        color: #fff;
        font-size: 11px;
        line-height: 12px;
    }
`;

const Spread = styled.div`
    position: absolute;
    left: 50%;
    top: 0;
    width: 43px;
    height: 14px;
    margin-left: -21px;
    border: 1px solid #222;
    background: #4c4a4a;
    text-align: center;
    line-height: 12px;
    font-size: 9px;
    font-weight: bold;
`;

const QtyRow = styled.div`
    display: flex;
    height: 20px;
    border-top: 1px solid #262626;
    border-bottom: 1px solid #262626;
`;

const Step = styled.button`
    width: 19px;
    background: #3a3a3a;
`;

const Qty = styled.button`
    display: flex;
    flex: 1;
    align-items: center;
    padding: 0 3px 0 11px;
    border: solid #262626;
    border-width: 0 1px;
    background: #4e4e4e;
    font-size: 12px;
    line-height: 12px;
    span {
        flex: 1;
    }
`;

const Terms = styled.div`
    display: grid;
    grid-template-columns: 1fr 1fr;
    gap: 1px;
    height: 22px;
    background: #262626;
    border-bottom: 1px solid #262626;
`;

const Term = styled.div`
    display: flex;
    align-items: center;
    justify-content: space-between;
    padding: 0 3px 0 4px;
    background: #444;
`;

const TermValue = styled.span`
    display: flex;
    align-items: center;
    gap: 7px;
`;

const Book = styled.table`
    width: auto;
    min-width: calc(100% - 2px);
    margin: 0 1px 1px;
    caption {
        height: 12px;
        border: 1px solid #60656e;
        background: #4c515c;
        line-height: 10px;
        font-weight: bold;
    }
    td {
        height: 18px;
        border: 1px solid #2a2a2a;
        text-align: center;
    }
`;

const SizeCell = styled.td`
    width: 28%;
    background: #4a4a4a;
    color: ${p => (p.$blue ? '#7b9bd8' : '#e6e6e6')};
`;

const LevelCell = styled.td`
    width: 22%;
    background: #3f3f3f;
    font-size: 10px;
    font-weight: bold;
    line-height: 10px;
    sup {
        margin-left: 1px;
        font-size: 9px;
        line-height: 8px;
    }
`;

const Positions = styled.table`
    th {
        height: 20px;
        border: solid #2a2a2a;
        border-width: 0 1px 1px 0;
        background: linear-gradient(#4c4a4a, #363636);
    }
    td {
        height: 19px;
        padding: 0 4px 0 5px;
        border: solid #2c2f36;
        border-width: 0 1px 1px 0;
        line-height: 10px;
        white-space: nowrap;
    }
`;

const HeadCell = styled.div`
    display: flex;
    align-items: center;
    padding: 0 3px 0 ${p => (p.$sorted ? '11px' : '3px')};
    span {
        flex: 1;
    }
`;

const FilterRow = styled.tr`
    background: #3a4866;
    td {
        height: 18px;
    }
`;

const FilterCell = styled.div`
    display: flex;
    align-items: center;
    margin-right: -2px;
    input {
        flex: 1;
        min-width: 0;
        color: #7fa4ee;
        outline: none;
    }
    input::placeholder {
        color: #a8b3cc;
    }
`;

const PositionRow = styled.tr`
    background: ${p => (p.$selected ? '#46547a' : '#444')};
    &:nth-child(2) td {
        height: 18px;
    }
`;

const CenterCell = styled.td`
    text-align: center;
`;

const NumberCell = styled.td`
    text-align: right;
`;

export default App
